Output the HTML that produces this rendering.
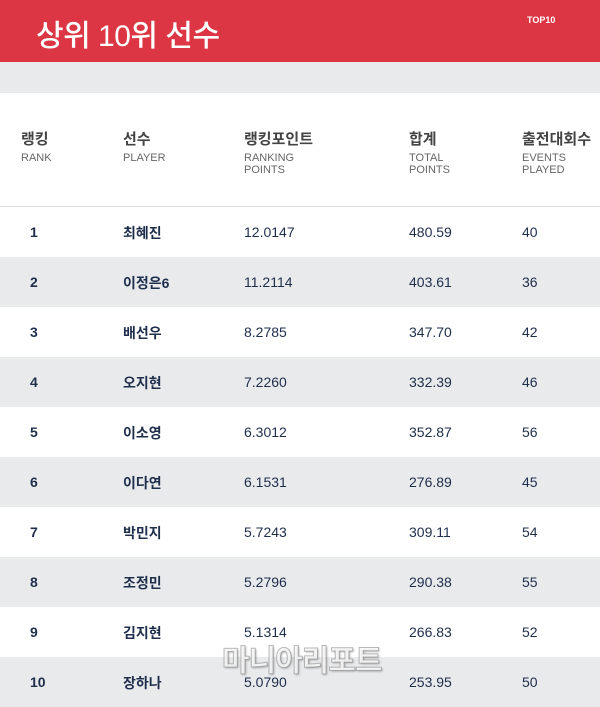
<!DOCTYPE html>
<html><head><meta charset="utf-8"><style>
*{margin:0;padding:0;box-sizing:border-box}
body{width:600px;height:707px;overflow:hidden;background:#fff;font-family:"Liberation Sans","Noto Sans CJK KR",sans-serif;position:relative}
.top{position:absolute;left:0;top:0;width:600px;height:62px;background:#dc3644}
.top h1{position:absolute;left:36px;top:11px;color:#fff;font-size:30px;font-weight:500;letter-spacing:-0.5px}
.top .t10{position:absolute;left:527px;top:15px;color:#fff;font-size:9px;font-weight:bold}
.band{position:absolute;left:0;top:62px;width:600px;height:31px;background:#e9eaec}
.hd{position:absolute;top:93px;left:0;width:600px;height:114px;border-bottom:1px solid #dcdde0}
.c{position:absolute;color:#333}
.k{font-size:15px;font-weight:bold;color:#444;top:35px}
.e{font-size:11px;color:#666;top:59px;line-height:12px}
.row{position:absolute;left:0;width:600px;height:50px;font-size:14px;color:#1f2e4b}
.row.g{background:#e9eaec}
.row span{position:absolute;top:17px}
.row span.r{font-weight:bold}
.row b{position:absolute;top:16px;font-size:14px}
.wm{position:absolute;left:222px;top:636px;font-size:30px;font-weight:bold;color:rgba(255,255,255,0.8);-webkit-text-stroke:1px rgba(120,120,120,0.5);text-shadow:1px 1px 2px rgba(0,0,0,0.3);letter-spacing:-1px}
</style></head><body>
<div class="top"><h1>상위 10위 선수</h1><div class="t10">TOP10</div></div>
<div class="band"></div>
<div class="hd">
<div class="c k" style="left:21px">랭킹</div><div class="c e" style="left:21px">RANK</div>
<div class="c k" style="left:123px">선수</div><div class="c e" style="left:123px">PLAYER</div>
<div class="c k" style="left:244px">랭킹포인트</div><div class="c e" style="left:244px">RANKING<br>POINTS</div>
<div class="c k" style="left:409px">합계</div><div class="c e" style="left:409px">TOTAL<br>POINTS</div>
<div class="c k" style="left:522px">출전대회수</div><div class="c e" style="left:522px">EVENTS<br>PLAYED</div>
</div>
<div class="row" style="top:207px"><span class="r" style="left:30px">1</span><b style="left:123px">최혜진</b><span style="left:244px">12.0147</span><span style="left:409px">480.59</span><span style="left:522px">40</span></div>
<div class="row g" style="top:257px"><span class="r" style="left:30px">2</span><b style="left:123px">이정은6</b><span style="left:244px">11.2114</span><span style="left:409px">403.61</span><span style="left:522px">36</span></div>
<div class="row" style="top:307px"><span class="r" style="left:30px">3</span><b style="left:123px">배선우</b><span style="left:244px">8.2785</span><span style="left:409px">347.70</span><span style="left:522px">42</span></div>
<div class="row g" style="top:357px"><span class="r" style="left:30px">4</span><b style="left:123px">오지현</b><span style="left:244px">7.2260</span><span style="left:409px">332.39</span><span style="left:522px">46</span></div>
<div class="row" style="top:407px"><span class="r" style="left:30px">5</span><b style="left:123px">이소영</b><span style="left:244px">6.3012</span><span style="left:409px">352.87</span><span style="left:522px">56</span></div>
<div class="row g" style="top:457px"><span class="r" style="left:30px">6</span><b style="left:123px">이다연</b><span style="left:244px">6.1531</span><span style="left:409px">276.89</span><span style="left:522px">45</span></div>
<div class="row" style="top:507px"><span class="r" style="left:30px">7</span><b style="left:123px">박민지</b><span style="left:244px">5.7243</span><span style="left:409px">309.11</span><span style="left:522px">54</span></div>
<div class="row g" style="top:557px"><span class="r" style="left:30px">8</span><b style="left:123px">조정민</b><span style="left:244px">5.2796</span><span style="left:409px">290.38</span><span style="left:522px">55</span></div>
<div class="row" style="top:607px"><span class="r" style="left:30px">9</span><b style="left:123px">김지현</b><span style="left:244px">5.1314</span><span style="left:409px">266.83</span><span style="left:522px">52</span></div>
<div class="row g" style="top:657px"><span class="r" style="left:30px">10</span><b style="left:123px">장하나</b><span style="left:244px">5.0790</span><span style="left:409px">253.95</span><span style="left:522px">50</span></div>
<div class="wm">마니아리포트</div>
</body></html>
